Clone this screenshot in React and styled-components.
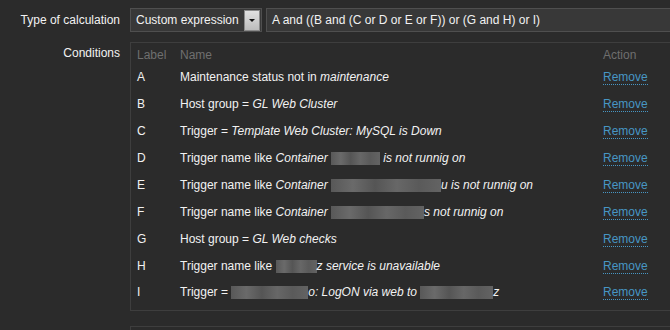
import React from 'react';
import styled, { createGlobalStyle } from 'styled-components';

const GlobalStyle = createGlobalStyle`
  html, body {
    margin: 0;
    padding: 0;
    background: #2b2b2b;
    overflow: hidden;
  }
  body {
    font-family: Arial, "Liberation Sans", sans-serif;
    font-size: 12px;
    color: #f2f2f2;
  }
`;

// --- Layout ---

const Page = styled.div`
  width: 760px;
  padding-top: 8px;
`;

const FormRow = styled.div`
  display: grid;
  grid-template-columns: 120px 1fr;
  column-gap: 10px;
  margin-bottom: ${props => props.gap || 10}px;
`;

const Label = styled.div`
  text-align: right;
  line-height: 14px;
  padding-top: ${props => props.top || 5}px;
  color: #f2f2f2;
`;

const Controls = styled.div`
  display: flex;
  gap: 4px;
`;

// --- Select + input ---

const SelectBox = styled.div`
  display: flex;
  align-items: stretch;
  width: 130px;
  height: 22px;
  border: 1px solid #4f4f4f;
  background: #383838;
`;

const SelectText = styled.div`
  flex: 1;
  padding-left: 5px;
  line-height: 22px;
  color: #f2f2f2;
`;

const SelectButton = styled.div`
  width: 14px;
  margin: 1px 1px 0 0;
  background: linear-gradient(#e0e0e0, #bcbcbc);
  border: 1px solid #8a8a8a;
  display: flex;
  align-items: center;
  justify-content: center;

  &::after {
    content: '';
    border-left: 3px solid transparent;
    border-right: 3px solid transparent;
    border-top: 3px solid #111;
  }
`;

const TextInput = styled.div`
  width: 480px;
  height: 22px;
  border: 1px solid #4f4f4f;
  background: #383838;
  padding-left: 5px;
  line-height: 22px;
  color: #f2f2f2;
`;

// --- Conditions table ---

const Box = styled.div`
  border: 1px solid #3e3e3e;
  padding: 5px 0 4px;
  width: 560px;
  height: ${props => props.height || 'auto'};
`;

const Table = styled.table`
  border-collapse: collapse;
  border-spacing: 0;
`;

const Th = styled.th`
  text-align: left;
  font-weight: normal;
  color: #6f6f6f;
  padding: 0 6px 2px;
  line-height: 14px;
  width: ${props => props.width || 'auto'};
`;

const Td = styled.td`
  padding: 0 6px;
  height: 26.875px;
  line-height: 14px;
  vertical-align: middle;
  white-space: nowrap;
`;

const Em = styled.em`
  font-style: italic;
`;

const Blur = styled.span`
  display: inline-block;
  width: ${props => props.w}px;
  height: 13px;
  vertical-align: -3px;
  background: linear-gradient(90deg, #585858, #6a6a6a 20%, #555 40%, #676767 60%, #5a5a5a 80%, #636363);
`;

const Link = styled.a`
  color: #4796c4;
  text-decoration: none;
  border-bottom: 1px dotted #4796c4;
  cursor: pointer;
`;

const conditions = [
  { label: 'A', name: <>Maintenance status not in <Em>maintenance</Em></> },
  { label: 'B', name: <>Host group = <Em>GL Web Cluster</Em></> },
  { label: 'C', name: <>Trigger = <Em>Template Web Cluster: MySQL is Down</Em></> },
  { label: 'D', name: <>Trigger name like <Em>Container <Blur w={49} /> is not runnig on</Em></> },
  { label: 'E', name: <>Trigger name like <Em>Container <Blur w={110} />u is not runnig on</Em></> },
  { label: 'F', name: <>Trigger name like <Em>Container <Blur w={93} />s not runnig on</Em></> },
  { label: 'G', name: <>Host group = <Em>GL Web checks</Em></> },
  { label: 'H', name: <>Trigger name like <Blur w={41} /><Em>z service is unavailable</Em></> },
  { label: 'I', name: <>Trigger = <Blur w={77} /><Em>o: LogON via web to <Blur w={73} />z</Em></> },
];

export default function App() {
  return (
    <>
      <GlobalStyle />
      <Page>
        <FormRow gap={10}>
          <Label>Type of calculation</Label>
          <Controls>
            <SelectBox>
              <SelectText>Custom expression</SelectText>
              <SelectButton />
            </SelectBox>
            <TextInput>A and ((B and (C or D or E or F)) or (G and H) or I)</TextInput>
          </Controls>
        </FormRow>

        <FormRow gap={15}>
          <Label top={4}>Conditions</Label>
          <Box>
            <Table>
              <thead>
                <tr>
                  <Th width="31px">Label</Th>
                  <Th width="411px">Name</Th>
                  <Th>Action</Th>
                </tr>
              </thead>
              <tbody>
                {conditions.map(c => (
                  <tr key={c.label}>
                    <Td>{c.label}</Td>
                    <Td>{c.name}</Td>
                    <Td><Link>Remove</Link></Td>
                  </tr>
                ))}
              </tbody>
            </Table>
          </Box>
        </FormRow>

        <FormRow>
          <div />
          <Box height="40px" />
        </FormRow>
      </Page>
    </>
  );
}
